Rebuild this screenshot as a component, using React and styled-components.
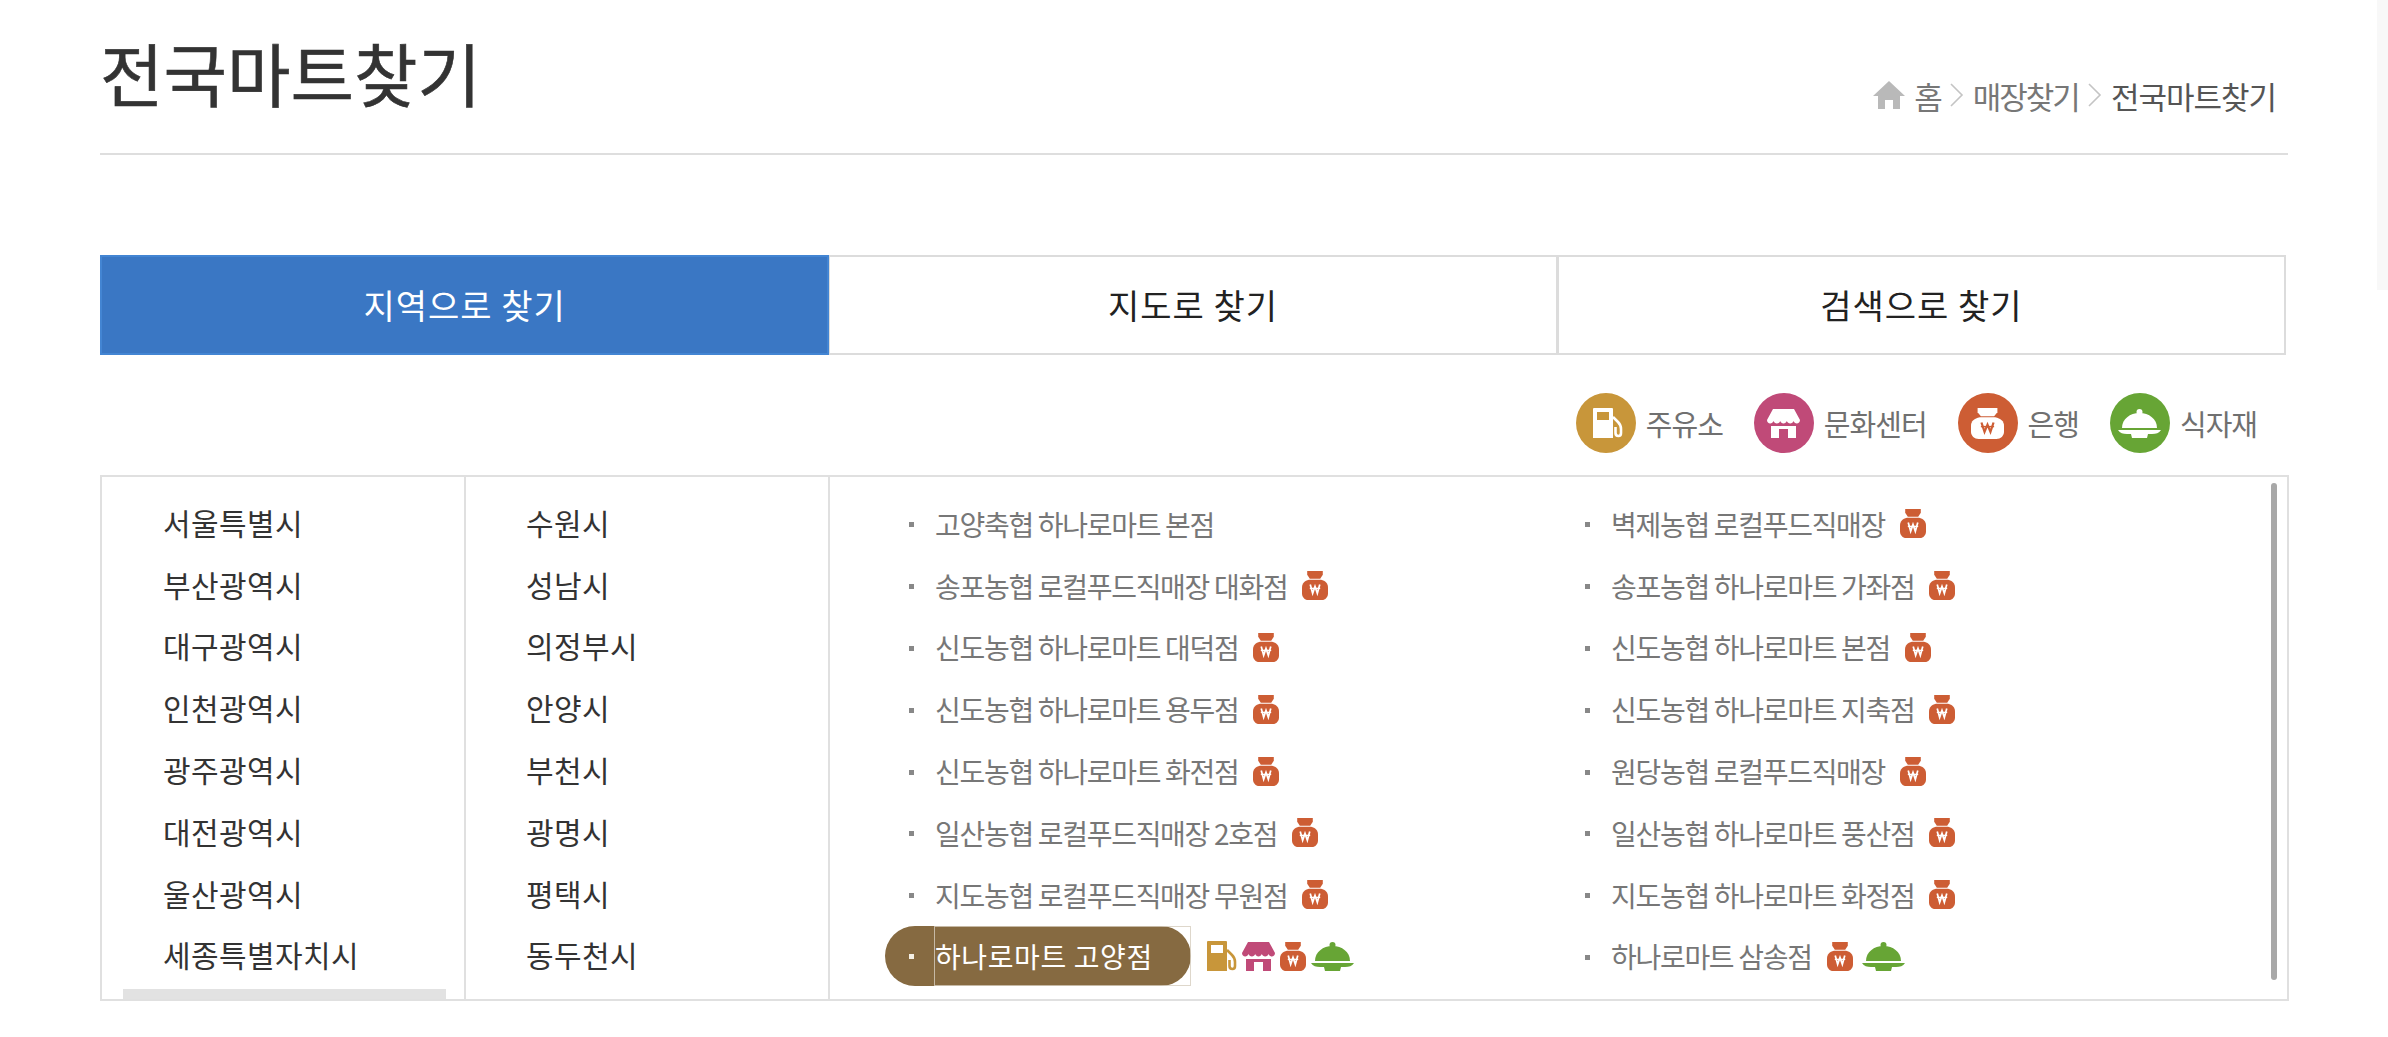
import React from 'react'
import styled, { createGlobalStyle } from 'styled-components'

const GlobalStyle = createGlobalStyle`
  html, body {
    margin: 0;
    background: #fff;
    overflow: hidden;
  }
  body {
    font-family: "Noto Sans CJK KR", "Noto Sans", sans-serif;
  }
`

const Page = styled.div`
  width: 2388px;
  height: 1037px;
  box-sizing: border-box;
  padding: 0 100px;
  position: relative;
  overflow: hidden;
`

const PageScroll = styled.div`
  position: absolute;
  top: 0;
  right: 0;
  width: 11px;
  height: 290px;
  background: #f8f8f8;
`

const Header = styled.header`
  display: flex;
  justify-content: space-between;
  width: 2188px;
  height: 155px;
  box-sizing: border-box;
  border-bottom: 2px solid #dedede;
`

const Title = styled.h1`
  margin: 25px 0 0;
  font-size: 69px;
  line-height: 94px;
  font-weight: 400;
  color: #333;
  -webkit-text-stroke: 0.6px #333;
`

const Crumbs = styled.div`
  display: flex;
  align-items: center;
  gap: 9px;
  height: 40px;
  margin: 75px 12px 0 0;
  font-size: 31px;
  color: #777;
`

const CrumbLink = styled.span`
  letter-spacing: -2px;
`

const CrumbNow = styled.span`
  color: #555;
  letter-spacing: -1px;
`

const Tabs = styled.nav`
  display: flex;
  width: 2186px;
  margin-top: 100px;
`

const Tab = styled.div`
  flex: 1;
  height: 100px;
  box-sizing: border-box;
  padding-bottom: 2px;
  display: flex;
  align-items: center;
  justify-content: center;
  font-size: 34px;
  letter-spacing: 1px;
  background: ${({ $active }) => ($active ? '#3a77c4' : '#fff')};
  color: ${({ $active }) => ($active ? '#fff' : '#222')};
  border: 2px solid ${({ $active }) => ($active ? '#4385d3' : '#dcdcdc')};
  border-left-width: ${({ $active }) => ($active ? '2px' : '1px')};
`

const Legend = styled.div`
  display: flex;
  justify-content: flex-end;
  align-items: center;
  gap: 31px;
  width: 2188px;
  height: 120px;
  box-sizing: border-box;
  padding: 16px 31px 0 0;
`

const LegendItem = styled.div`
  display: flex;
  align-items: center;
  gap: 10px;
  font-size: 29px;
  color: #707070;
  letter-spacing: -1px;
`

const Badge = styled.span`
  width: 60px;
  height: 60px;
  box-sizing: border-box;
  padding-left: ${({ $shift }) => $shift || 0}px;
  border-radius: 50%;
  display: flex;
  align-items: center;
  justify-content: center;
  background: ${({ $color }) => $color};
`

const Panel = styled.section`
  display: grid;
  grid-template-columns: 364px 364px 1fr;
  width: 2189px;
  height: 526px;
  box-sizing: border-box;
  border: 2px solid #e0e0e0;
  position: relative;
`

const Column = styled.ul`
  list-style: none;
  margin: 0;
  padding: 14px 0 0 ${({ $pad }) => $pad}px;
  border-right: 2px solid #e0e0e0;
  position: relative;
`

const RegionItem = styled.li`
  height: 61.8px;
  display: flex;
  align-items: center;
  font-size: 30px;
  color: #333;
  letter-spacing: 0.4px;
  white-space: nowrap;
`

const HScroll = styled.div`
  position: absolute;
  left: 21px;
  right: 18px;
  bottom: 0;
  height: 10px;
  background: #e2e2e2;
`

const VScroll = styled.div`
  position: absolute;
  top: 6px;
  right: 10px;
  bottom: 19px;
  width: 6px;
  border-radius: 3px;
  background: #a8a8a8;
`

const StoreGrid = styled.ul`
  list-style: none;
  margin: 0;
  padding: 16px 0 0 79px;
  display: grid;
  grid-template-columns: 676px 1fr;
  grid-auto-rows: 61.8px;
`

const Store = styled.li`
  display: flex;
  align-items: center;
  font-size: 28px;
  color: #777;
  letter-spacing: -1.3px;
  white-space: nowrap;
`

const Dot = styled.i`
  width: 5px;
  height: 5px;
  flex: none;
  margin-right: 21px;
  margin-top: 2px;
  background: #888;
`

const StoreIcons = styled.span`
  display: inline-flex;
  align-items: center;
  gap: 9px;
  margin-left: 15px;
`

const Pill = styled.li`
  display: flex;
  align-items: center;
  margin-left: -24px;
  font-size: 28px;
  white-space: nowrap;
`

const PillBody = styled.span`
  position: relative;
  display: flex;
  align-items: center;
  flex: none;
  width: 306px;
  height: 60px;
  box-sizing: border-box;
  padding-left: 24px;
  border-radius: 30px;
  background: #866a41;
  color: #fff;
  letter-spacing: 0.6px;

  &::after {
    content: '';
    position: absolute;
    top: 0;
    bottom: 0;
    left: 49px;
    right: 0;
    border: 1px solid rgba(214, 205, 190, 0.8);
  }
`

const PillDot = styled.i`
  width: 5px;
  height: 5px;
  flex: none;
  margin-right: 21px;
  background: #f4f0e6;
`

const PillIcons = styled.span`
  display: inline-flex;
  align-items: center;
  gap: 5px;
  margin-left: 16px;
`

const Pump = ({ color = '#fff', cut = 'none' }) => (
  <svg width="30" height="30" viewBox="0 0 30 30">
    <path fill={color} fillRule="evenodd" d="M1 0h18a1 1 0 0 1 1 1v29H0V1a1 1 0 0 1 1-1zm3 4v8h12V4z" />
    <path fill="none" stroke={color} strokeWidth="2.6" d="M20 9l5 5c2 2 3 4 3 7v4c0 2-1 3-2.500 3s-3-1-3-3v-6" />
    {cut !== 'none' && <path fill={cut} d="M4 4h12v8H4z" />}
  </svg>
)

const Shop = ({ color = '#fff' }) => (
  <svg width="33" height="29" viewBox="0 0 33 29">
    <path fill={color} d="M6 0h21l6 11c0 2-1.500 3.500-3.200 3.500-1.400 0-2.800-1-3.300-2.500-.4 1.500-1.800 2.500-3.300 2.500S20.300 13.500 19.800 12c-.5 1.500-1.800 2.500-3.300 2.500s-2.800-1-3.300-2.500c-.5 1.500-1.800 2.500-3.300 2.500S7 13.500 6.500 12C6 13.500 4.700 14.500 3.200 14.500 1.500 14.500 0 13 0 11z" />
    <path fill={color} fillRule="evenodd" d="M4 17h25v12h-8V20h-9v9H4z" />
  </svg>
)

const Bag = ({ width = 26, height = 29, color = '#fff', mark = '#cd5d34' }) => (
  <svg width={width} height={height} viewBox="0 0 30 30" preserveAspectRatio="none">
    <path fill={color} d="M6 0h18v4l-3 4H9L6 4z" />
    <path fill={color} d="M8 9h14c5 1 8 4 8 8v6c0 4-3 7-7 7H7c-4 0-7-3-7-7v-6c0-4 3-7 8-8z" />
    <path fill="none" stroke={mark} strokeWidth="2" d="M9.500 14l2.800 9 2.700-7 2.700 7 2.800-9" />
    <path stroke={mark} strokeWidth="1.400" d="M9 18h12" />
  </svg>
)

const Cloche = ({ color = '#fff' }) => (
  <svg width="43" height="29" viewBox="0 0 43 29">
    <circle cx="21.500" cy="3" r="3" fill={color} />
    <path fill={color} d="M4 19C4 10 12 4 21.500 4S39 10 39 19z" />
    <path fill={color} d="M0 21h43c-2 3-5 4-9 4h-4l-1 4H14l-1-4H9c-4 0-7-1-9-4z" />
  </svg>
)

const regions = ['서울특별시', '부산광역시', '대구광역시', '인천광역시', '광주광역시', '대전광역시', '울산광역시', '세종특별자치시']
const cities = ['수원시', '성남시', '의정부시', '안양시', '부천시', '광명시', '평택시', '동두천시']

const stores = [
  ['고양축협 하나로마트 본점', ''],
  ['벽제농협 로컬푸드직매장', 'b'],
  ['송포농협 로컬푸드직매장 대화점', 'b'],
  ['송포농협 하나로마트 가좌점', 'b'],
  ['신도농협 하나로마트 대덕점', 'b'],
  ['신도농협 하나로마트 본점', 'b'],
  ['신도농협 하나로마트 용두점', 'b'],
  ['신도농협 하나로마트 지축점', 'b'],
  ['신도농협 하나로마트 화전점', 'b'],
  ['원당농협 로컬푸드직매장', 'b'],
  ['일산농협 로컬푸드직매장 2호점', 'b'],
  ['일산농협 하나로마트 풍산점', 'b'],
  ['지도농협 로컬푸드직매장 무원점', 'b'],
  ['지도농협 하나로마트 화정점', 'b'],
]

const colors = { gas: '#c8963a', shop: '#c04a78', bank: '#cd5d34', food: '#67a535' }

function App() {
  return (
    <Page>
      <GlobalStyle />
      <PageScroll />
      <Header>
        <Title>전국마트찾기</Title>
        <Crumbs>
          <svg width="32" height="28" viewBox="0 0 32 28">
            <path fill="#b9b9b9" d="M16 0L32 15h-5v13h-7v-9h-8v9H5V15H0z" />
          </svg>
          <CrumbLink>홈</CrumbLink>
          <svg width="14" height="28" viewBox="0 0 14 28">
            <path fill="none" stroke="#c4c4c4" strokeWidth="1.6" d="M1 3l11 11L1 25" />
          </svg>
          <CrumbLink>매장찾기</CrumbLink>
          <svg width="14" height="28" viewBox="0 0 14 28">
            <path fill="none" stroke="#c4c4c4" strokeWidth="1.6" d="M1 3l11 11L1 25" />
          </svg>
          <CrumbNow>전국마트찾기</CrumbNow>
        </Crumbs>
      </Header>

      <Tabs>
        <Tab $active>지역으로 찾기</Tab>
        <Tab>지도로 찾기</Tab>
        <Tab>검색으로 찾기</Tab>
      </Tabs>

      <Legend>
        <LegendItem><Badge $color={colors.gas} $shift={5}><Pump cut={colors.gas} /></Badge>주유소</LegendItem>
        <LegendItem><Badge $color={colors.shop}><Shop /></Badge>문화센터</LegendItem>
        <LegendItem><Badge $color={colors.bank}><Bag width={33} height={31} mark={colors.bank} /></Badge>은행</LegendItem>
        <LegendItem><Badge $color={colors.food}><Cloche /></Badge>식자재</LegendItem>
      </Legend>

      <Panel>
        <Column $pad={61}>
          {regions.map((r) => <RegionItem key={r}>{r}</RegionItem>)}
          <HScroll />
        </Column>
        <Column $pad={60}>
          {cities.map((c) => <RegionItem key={c}>{c}</RegionItem>)}
        </Column>
        <StoreGrid>
          {stores.map(([name, icon]) => (
            <Store key={name}>
              <Dot />
              {name}
              {icon && <StoreIcons><Bag color={colors.bank} mark="#fff" /></StoreIcons>}
            </Store>
          ))}
          <Pill>
            <PillBody><PillDot />하나로마트 고양점</PillBody>
            <PillIcons>
              <Pump color={colors.gas} />
              <Shop color={colors.shop} />
              <Bag color={colors.bank} mark="#fff" />
              <Cloche color={colors.food} />
            </PillIcons>
          </Pill>
          <Store>
            <Dot />
            하나로마트 삼송점
            <StoreIcons>
              <Bag color={colors.bank} mark="#fff" />
              <Cloche color={colors.food} />
            </StoreIcons>
          </Store>
        </StoreGrid>
        <VScroll />
      </Panel>
    </Page>
  )
}

export default App
